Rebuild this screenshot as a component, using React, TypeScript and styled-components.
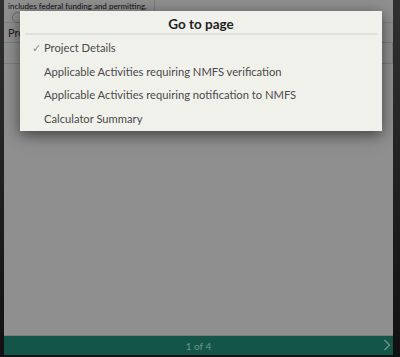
import React from "react";
import styled, { createGlobalStyle } from "styled-components";

const GlobalStyle = createGlobalStyle`
  html, body {
    margin: 0;
    padding: 0;
    background: #1a1a1a;
  }
  body {
    font-family: Lato, "Noto Sans", sans-serif;
  }
`;

const pages = [
  "Project Details",
  "Applicable Activities requiring NMFS verification",
  "Applicable Activities requiring notification to NMFS",
  "Calculator Summary",
];

const Frame = styled.div`
  width: 400px;
  height: 357px;
  display: flex;
  overflow: hidden;
`;

const SideStrip = styled.div<{ $w: number }>`
  width: ${(p) => p.$w}px;
  flex-shrink: 0;
  background: linear-gradient(#303030, #111111);
`;

const Main = styled.div`
  flex: 1;
  display: flex;
  flex-direction: column;
  background: #141414;
`;

const Stage = styled.div`
  position: relative;
  flex: 1;
  background: #ffffff;
  overflow: hidden;
`;

const TopRow = styled.div`
  display: flex;
  height: 22px;
  border-bottom: 1px solid #e4e4e4;
`;

const InfoCell = styled.div`
  width: 146px;
  padding: 1px 0 0 4px;
  border-right: 1px solid #d8d8d8;
  font-size: 8px;
  color: #222;
`;

const Radio = styled.span`
  display: block;
  width: 9px;
  height: 9px;
  border: 1px solid #bbb;
  border-radius: 50%;
  margin: 1px 0 0 4px;
`;

const FieldLabel = styled.div`
  padding: 3px 0 0 4px;
  font-size: 11px;
  color: #333;
`;

const FieldBox = styled.div`
  margin: 3px 0 0 0;
  height: 20px;
  border: 1px solid #ddd;
  border-left: none;
`;

const Shade = styled.div`
  position: absolute;
  inset: 0;
  background: rgba(0, 0, 0, 0.44);
`;

const Dialog = styled.div`
  position: absolute;
  left: 16px;
  top: 11px;
  width: 362px;
  background: #f1f1ec;
  box-shadow: 0 4px 14px rgba(0, 0, 0, 0.55);
  padding-bottom: 1px;
`;

const Title = styled.div`
  text-align: center;
  font-size: 13.5px;
  line-height: 16px;
  font-weight: 700;
  color: #1f1f1f;
  padding: 5px 0 1px;
  margin: 0 5px;
  border-bottom: 2px solid #e2e2dd;
`;

const List = styled.ul`
  list-style: none;
  margin: 0;
  padding: 1px 0 0;
`;

const Item = styled.li`
  display: flex;
  align-items: center;
  height: 23.5px;
  padding-left: 12px;
  font-size: 11.2px;
  color: #4a4a4a;
`;

const Check = styled.span`
  width: 12px;
  font-size: 11px;
  color: #8a8a8a;
`;

const Footer = styled.div`
  height: 19px;
  margin-bottom: 2px;
  border-top: 1px solid #7c7c7c;
  background: #14554a;
  display: flex;
  align-items: center;
  justify-content: center;
  position: relative;
  font-size: 10px;
  color: #6f948b;
`;

const Next = styled.span`
  position: absolute;
  right: 2px;
  top: 3px;
  display: flex;
`;

export default function App() {
  return (
    <>
      <GlobalStyle />
      <Frame>
        <SideStrip $w={4} />
        <Main>
          <Stage>
            <TopRow>
              <InfoCell>
                includes federal funding and permitting.
                <Radio />
              </InfoCell>
            </TopRow>
            <FieldLabel>Project Name</FieldLabel>
            <FieldBox />
            <Shade />
            <Dialog>
              <Title>Go to page</Title>
              <List>
                {pages.map((p, i) => (
                  <Item key={p}>
                    <Check>{i === 0 ? "✓" : ""}</Check>
                    {p}
                  </Item>
                ))}
              </List>
            </Dialog>
          </Stage>
          <Footer>
            1 of 4
            <Next>
              <svg width="8" height="12" viewBox="0 0 8 12">
                <path d="M1.5 1 L6.5 6 L1.5 11" fill="none" stroke="#6f948b" strokeWidth="1.3" />
              </svg>
            </Next>
          </Footer>
        </Main>
        <SideStrip $w={7} />
      </Frame>
    </>
  );
}
